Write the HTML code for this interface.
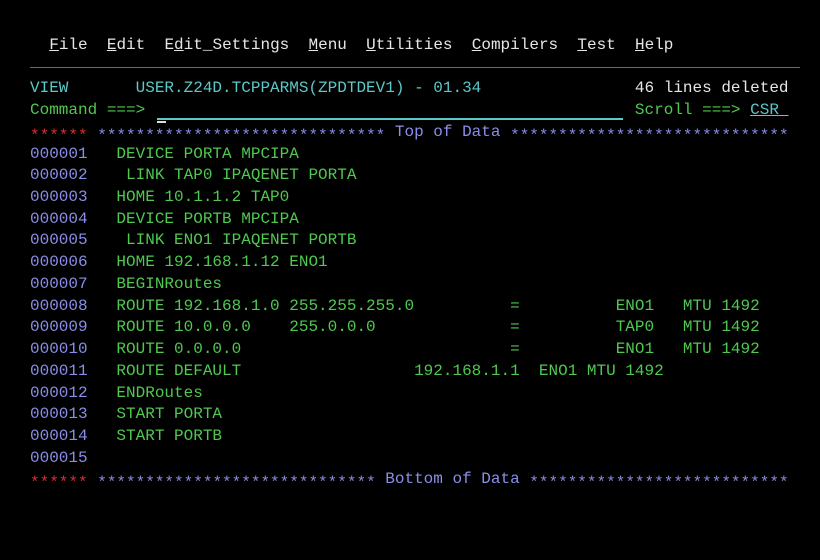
<!DOCTYPE html>
<html><head><meta charset="utf-8"><style>
html,body{margin:0;padding:0;background:#000;width:820px;height:560px;overflow:hidden}
pre{position:absolute;left:30px;top:35px;margin:0;font-family:"Liberation Mono",monospace;font-size:16px;line-height:21.72px;color:#4fc94f;letter-spacing:0}
.w{color:#e6e6e6}.t{color:#5cc8c8}.b{color:#8a8ee8}.r{color:#e03030}.g{color:#4fc94f}
.u{text-decoration:underline}
.s{position:relative;top:4px}
.sep{position:absolute;left:30px;top:67px;width:770px;height:1px;background:#5a6a9a}
.fld{position:absolute;left:157px;top:118px;width:466px;height:2px;background:#5cc8c8}
.cur{position:absolute;left:157px;top:121px;width:9px;height:2px;background:#ddd}
</style></head><body>
<div class="sep"></div><div class="fld"></div><div class="cur"></div>
<pre><span class="w">  <span class="u">F</span>ile  <span class="u">E</span>dit  E<span class="u">d</span>it_Settings  <span class="u">M</span>enu  <span class="u">U</span>tilities  <span class="u">C</span>ompilers  <span class="u">T</span>est  <span class="u">H</span>elp</span>

<span class="t">VIEW       USER.Z24D.TCPPARMS(ZPDTDEV1) - 01.34</span>                <span class="w">46 lines deleted</span>
<span class="g">Command ===></span>                                                   <span class="g">Scroll ===></span> <span class="t u">CSR </span>
<span class="r s">******</span> <span class="b"><span class="s">******************************</span> Top of Data <span class="s">*****************************</span></span>
<span class="b">000001</span>   DEVICE PORTA MPCIPA
<span class="b">000002</span>    LINK TAP0 IPAQENET PORTA
<span class="b">000003</span>   HOME 10.1.1.2 TAP0
<span class="b">000004</span>   DEVICE PORTB MPCIPA
<span class="b">000005</span>    LINK ENO1 IPAQENET PORTB
<span class="b">000006</span>   HOME 192.168.1.12 ENO1
<span class="b">000007</span>   BEGINRoutes
<span class="b">000008</span>   ROUTE 192.168.1.0 255.255.255.0          =          ENO1   MTU 1492
<span class="b">000009</span>   ROUTE 10.0.0.0    255.0.0.0              =          TAP0   MTU 1492
<span class="b">000010</span>   ROUTE 0.0.0.0                            =          ENO1   MTU 1492
<span class="b">000011</span>   ROUTE DEFAULT                  192.168.1.1  ENO1 MTU 1492
<span class="b">000012</span>   ENDRoutes
<span class="b">000013</span>   START PORTA
<span class="b">000014</span>   START PORTB
<span class="b">000015</span>
<span class="r s">******</span> <span class="b"><span class="s">*****************************</span> Bottom of Data <span class="s">***************************</span></span>
</pre>
</body></html>
